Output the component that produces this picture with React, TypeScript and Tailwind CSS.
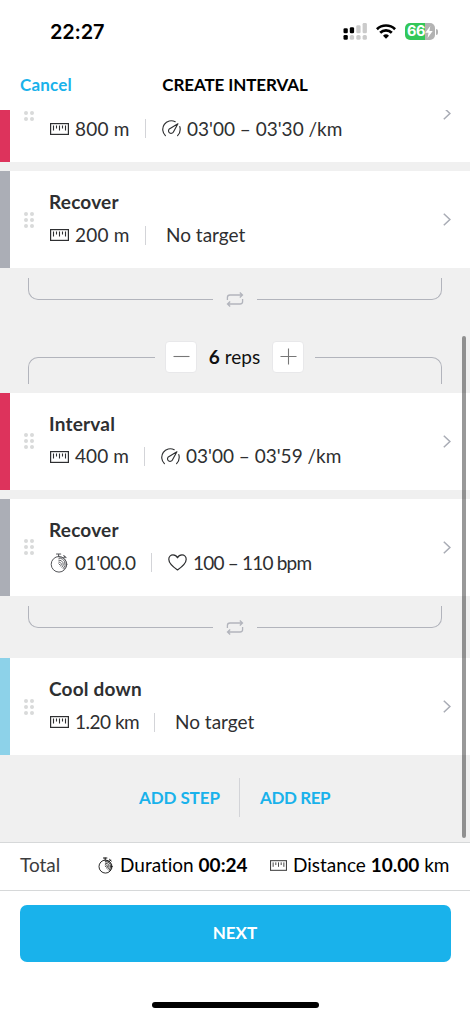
import type { ReactNode } from 'react';

type Metric = 'distance' | 'duration';
type Target = 'pace' | 'heart' | 'none';

interface Step {
  title?: string;
  color: string;
  metric: Metric;
  value: string;
  valueClass: string;
  target: Target;
  targetText: string;
  targetClass: string;
}

const steps: Record<string, Step> = {
  // title is scrolled out of view under the header
  intervalLong: {
    color: 'bg-[#dd335c]',
    metric: 'distance',
    value: '800 m',
    valueClass: 'w-[55px] tracking-[0.2px]',
    target: 'pace',
    targetText: "03'00 – 03'30 /km",
    targetClass: 'tracking-normal',
  },
  recoverDistance: {
    title: 'Recover',
    color: 'bg-[#abaeb6]',
    metric: 'distance',
    value: '200 m',
    valueClass: 'w-[55px] tracking-[0.2px]',
    target: 'none',
    targetText: 'No target',
    targetClass: 'tracking-normal',
  },
  intervalShort: {
    title: 'Interval',
    color: 'bg-[#dd335c]',
    metric: 'distance',
    value: '400 m',
    valueClass: 'w-[54px] tracking-[0.1px]',
    target: 'pace',
    targetText: "03'00 – 03'59 /km",
    targetClass: 'tracking-normal',
  },
  recoverTime: {
    title: 'Recover',
    color: 'bg-[#abaeb6]',
    metric: 'duration',
    value: "01'00.0",
    valueClass: 'w-[61px] tracking-[-0.4px]',
    target: 'heart',
    targetText: '100 – 110 bpm',
    targetClass: 'tracking-[-0.8px]',
  },
  coolDown: {
    title: 'Cool down',
    color: 'bg-[#8dd2e9]',
    metric: 'distance',
    value: '1.20 km',
    valueClass: 'w-[64px] tracking-[-0.5px]',
    target: 'none',
    targetText: 'No target',
    targetClass: 'tracking-normal',
  },
};

const RulerIcon = ({ className }: { className: string }) => (
  <svg className={className} viewBox="0 0 19 12" fill="none" stroke="currentColor">
    <rect x="0.6" y="0.6" width="17.8" height="10.8" strokeWidth="1.2" />
    <path d="M3.5 2.5v5M6.5 2.500v3M9.500 2.500v5M12.500 2.500v3M15.500 2.500v5" strokeWidth="1.1" />
  </svg>
);

const StopwatchIcon = ({ className }: { className: string }) => (
  <svg className={className} viewBox="0 0 18 20" fill="none" stroke="currentColor" strokeLinecap="round">
    <circle cx="9" cy="11.3" r="7.8" strokeWidth="1" />
    <path d="M6.5 1h4.2M8.6 1v2.5M13.8 2.6l2.2 2M14.9 3.5l-1.2 1.4" strokeWidth="1.1" />
    <path d="M8.8 5.2a6 6 0 0 1 4.5 10.3M8.8 7.1a4.2 4.2 0 0 1 3.2 7.2M8.8 9a2.4 2.4 0 0 1 1.8 4.1M8.8 10.8l1 1" strokeWidth="0.9" />
    <path d="M9.5 4.1a7 7 0 0 1 4.6 12.2" strokeWidth="0.6" />
  </svg>
);

const GaugeIcon = () => (
  <svg className="h-[17px] w-[19px]" viewBox="0 0 19 17" fill="none" stroke="currentColor" strokeWidth="1.15" strokeLinecap="round" strokeLinejoin="round">
    <path d="M3.4 15.6A8.6 8.6 0 0 1 13.2 1.7" />
    <path d="M17.8 6.6c.9 3.2.2 6.5-2.2 9" />
    <path d="M15.9 3.8 7.3 8.9a2.6 2.6 0 1 0 4.1 3.1z" />
  </svg>
);

const HeartIcon = () => (
  <svg className="h-[17px] w-[19px]" viewBox="0 0 19 17" fill="none" stroke="currentColor" strokeWidth="1.2" strokeLinejoin="round">
    <path d="M9.5 16C6 13.6.8 10 .8 5.3.8 2.7 2.7.9 5 .9c2 0 3.6 1.1 4.5 2.9C10.4 2 12 .9 14 .9c2.3 0 4.2 1.8 4.2 4.4C18.200 10 13 13.600 9.500 16z" />
  </svg>
);

const ChevronIcon = () => (
  <svg className="h-[13px] w-2" viewBox="0 0 8 13" fill="none" stroke="#a9acb5" strokeWidth="1.5">
    <path d="M.8.7 6.9 6.5.8 12.3" />
  </svg>
);

const RepeatIcon = () => (
  <svg className="h-[15px] w-[18px]" viewBox="0 0 18 15" fill="none" stroke="#b2b4bc" strokeWidth="1.3">
    <path d="M1.400 8V5.500Q1.400 3 4 3H16.500M13.800.5 16.500 3 13.800 5.500" />
    <path d="M16.600 7V9.500Q16.600 12 14 12H1.500M4.200 9.500 1.500 12l2.700 2.500" />
  </svg>
);

const DragHandle = () => (
  <div className="grid w-[10px] grid-cols-2 gap-[2px]">
    {[0, 1, 2, 3, 4, 5].map((dot) => (
      <span key={dot} className="size-1 rounded-full bg-[#d9dada]" />
    ))}
  </div>
);

const StepCard = ({ step }: { step: Step }) => (
  <div className="flex h-[96.7px] shrink-0 items-center bg-white">
    <div className={`h-full w-[10px] ${step.color}`} />
    <div className="ml-[14px]">
      <DragHandle />
    </div>
    <div className="ml-[15px] flex-1 pb-[2px] text-[#2e2f31]">
      <div className="h-6 text-[19px] leading-6 font-bold tracking-[0.2px]">
        {step.title && <h3>{step.title}</h3>}
      </div>
      <div className="mt-[9px] flex h-6 items-center text-[19px] whitespace-nowrap">
        <div className="flex w-[26px] pl-px">
          {step.metric === 'distance' ? (
            <RulerIcon className="h-3 w-[19px]" />
          ) : (
            <StopwatchIcon className="h-5 w-[18px] text-[#55565a]" />
          )}
        </div>
        <span className={step.valueClass}>{step.value}</span>
        <span className="ml-[15px] h-[19px] w-px bg-[#d3d4d8]" />
        <div className="ml-[16px] flex">
          {step.target === 'pace' && <GaugeIcon />}
          {step.target === 'heart' && <HeartIcon />}
        </div>
        <span className={`${step.target === 'none' ? 'ml-1' : 'ml-[6px]'} ${step.targetClass}`}>{step.targetText}</span>
      </div>
    </div>
    <div className="mr-[19px]">
      <ChevronIcon />
    </div>
  </div>
);

const RepsFooter = () => (
  <div className="flex h-[62.5px] shrink-0 items-start px-[28px] pt-[10px]">
    <div className="h-[22px] flex-1 rounded-bl-[10px] border-b border-l border-[#b2b4bc]" />
    <div className="flex w-[44px] justify-center pt-[14px]">
      <RepeatIcon />
    </div>
    <div className="h-[22px] flex-1 rounded-br-[10px] border-r border-b border-[#b2b4bc]" />
  </div>
);

const RepsButton = ({ children }: { children: ReactNode }) => (
  <button className="flex size-8 items-center justify-center rounded-[4px] border border-[#e8e8ea] bg-white">
    <svg className="size-[17px]" viewBox="0 0 17 17" fill="none" stroke="#777" strokeWidth="1.1">
      {children}
    </svg>
  </button>
);

const RepsHeader = ({ reps }: { reps: number }) => (
  <div className="flex h-[62.5px] shrink-0 items-start px-[28px] pt-[10.5px]">
    <div className="mt-[16px] h-[27px] flex-1 rounded-tl-[10px] border-t border-l border-[#b2b4bc]" />
    <div className="flex w-[160px] items-center justify-center pr-px">
      <RepsButton>
        <path d="M.5 8.5h16" />
      </RepsButton>
      <span className="w-[75px] text-center text-[19px] whitespace-nowrap text-[#111]">
        <b>{reps}</b> reps
      </span>
      <RepsButton>
        <path d="M.5 8.5h16M8.500.5v16" />
      </RepsButton>
    </div>
    <div className="mt-[16px] h-[27px] flex-1 rounded-tr-[10px] border-t border-r border-[#b2b4bc]" />
  </div>
);

const StatusBar = () => (
  <div className="flex h-[63px] items-center justify-between pr-[32px] pl-[50px]">
    <span className="font-['Inter'] text-[20px] font-semibold tracking-[-0.2px]">22:27</span>
    <div className="flex items-center">
      <svg className="h-[17px] w-[24px]" viewBox="0 0 24 17">
        <rect x="0.5" y="5.3" width="4.3" height="5" rx="1.3" />
        <rect x="6.8" y="4.2" width="4.3" height="6" rx="1.3" />
        <rect x="13.3" y="2.2" width="4.3" height="8" rx="1.3" fill="#cbcbcb" />
        <rect x="19.6" y="0" width="4.3" height="10.2" rx="1.3" fill="#cbcbcb" />
        <rect x="0.5" y="12" width="4.3" height="4.8" rx="1.3" />
        <rect x="6.8" y="12" width="4.3" height="4.8" rx="1.6" fill="#cbcbcb" />
        <rect x="13.3" y="12" width="4.3" height="4.8" rx="1.6" fill="#cbcbcb" />
        <rect x="19.6" y="12" width="4.3" height="4.8" rx="1.6" fill="#cbcbcb" />
      </svg>
      <svg className="ml-[9px] h-[15px] w-[20px]" viewBox="0 0 20 15" fill="none" stroke="#000" strokeWidth="2.7">
        <path d="M.9 5.2a13 13 0 0 1 18.2 0" />
        <path d="M4.2 8.8a8.3 8.3 0 0 1 11.6 0" />
        <path d="M7 11.8a4.3 4.3 0 0 1 6 0L10 14.8z" fill="#000" stroke="none" />
      </svg>
      <div className="ml-[9px] flex items-center">
        <div className="flex h-[17px] w-[30px] items-center rounded-[5px] bg-linear-to-r from-[#34c759] from-66% to-[#b3b3b3] to-66% pl-[2px] text-white">
          <span className="font-['Inter'] text-[14.5px] leading-none font-bold tracking-[-0.5px]">66</span>
          <svg className="h-[12px] w-[8px]" viewBox="0 0 8 12" fill="currentColor">
            <path d="M5.3 0 .3 6.8h3.2L2.6 12 7.7 5.1H4.4z" />
          </svg>
        </div>
        <span className="ml-px h-[6px] w-[2px] rounded-r-full bg-[#b3b3b3]" />
      </div>
    </div>
  </div>
);

export default function App() {
  return (
    <div className="flex h-[1018px] w-[470px] flex-col overflow-hidden bg-white font-['Lato',sans-serif] text-black [font-variant-ligatures:none]">
      <StatusBar />

      <header className="grid h-[47px] grid-cols-[1fr_auto_1fr] items-center px-5 pb-[3px] text-[17px] font-bold">
        <span className="text-left tracking-[0.2px] text-[#19b2eb]">Cancel</span>
        <h1 className="tracking-[-0.1px]">CREATE INTERVAL</h1>
      </header>

      <main className="relative flex h-[732px] flex-col overflow-hidden bg-[#f0f0f0]">
        <div className="-mt-[45px] flex flex-col">
          <div className="flex flex-col gap-[9.5px]">
            <StepCard step={steps.intervalLong} />
            <StepCard step={steps.recoverDistance} />
          </div>
          <RepsFooter />
          <RepsHeader reps={6} />
          <div className="flex flex-col gap-[9.5px]">
            <StepCard step={steps.intervalShort} />
            <StepCard step={steps.recoverTime} />
          </div>
          <RepsFooter />
          <StepCard step={steps.coolDown} />
          <div className="flex h-[86px] items-center justify-center text-[17px] font-bold text-[#19b2eb]">
            <button className="w-[100px] pr-5 text-right tracking-[-0.1px] whitespace-nowrap">ADD STEP</button>
            <span className="h-[39px] w-px bg-[#d3d4d8]" />
            <button className="w-[91px] pl-5 text-left tracking-[-0.4px] whitespace-nowrap">ADD REP</button>
          </div>
        </div>
        <div className="absolute top-[226px] right-[4px] h-[502px] w-[4px] rounded-full bg-black/40" />
      </main>

      <div className="flex h-[49px] items-center border-y border-[#d6d8d9] px-5 pb-[2px] text-[19px] whitespace-nowrap">
        <span className="w-[78px] text-[#3c3c3e]">Total</span>
        <StopwatchIcon className="h-[17px] w-[15px]" />
        <span className="ml-[7px] w-[129px]">
          Duration <b>00:24</b>
        </span>
        <RulerIcon className="ml-[21px] h-[11px] w-[17px] text-[#444]" />
        <span className="ml-[6px]">
          Distance <b>10.00</b> km
        </span>
      </div>

      <div className="px-[19.5px] pt-[14px]">
        <button className="h-[57px] w-full rounded-[7px] bg-[#19b2eb] pb-[2px] text-[17px] font-bold text-white">NEXT</button>
      </div>
      <div className="mx-auto mt-[40px] h-[6px] w-[167px] rounded-full bg-black" />
    </div>
  );
}
